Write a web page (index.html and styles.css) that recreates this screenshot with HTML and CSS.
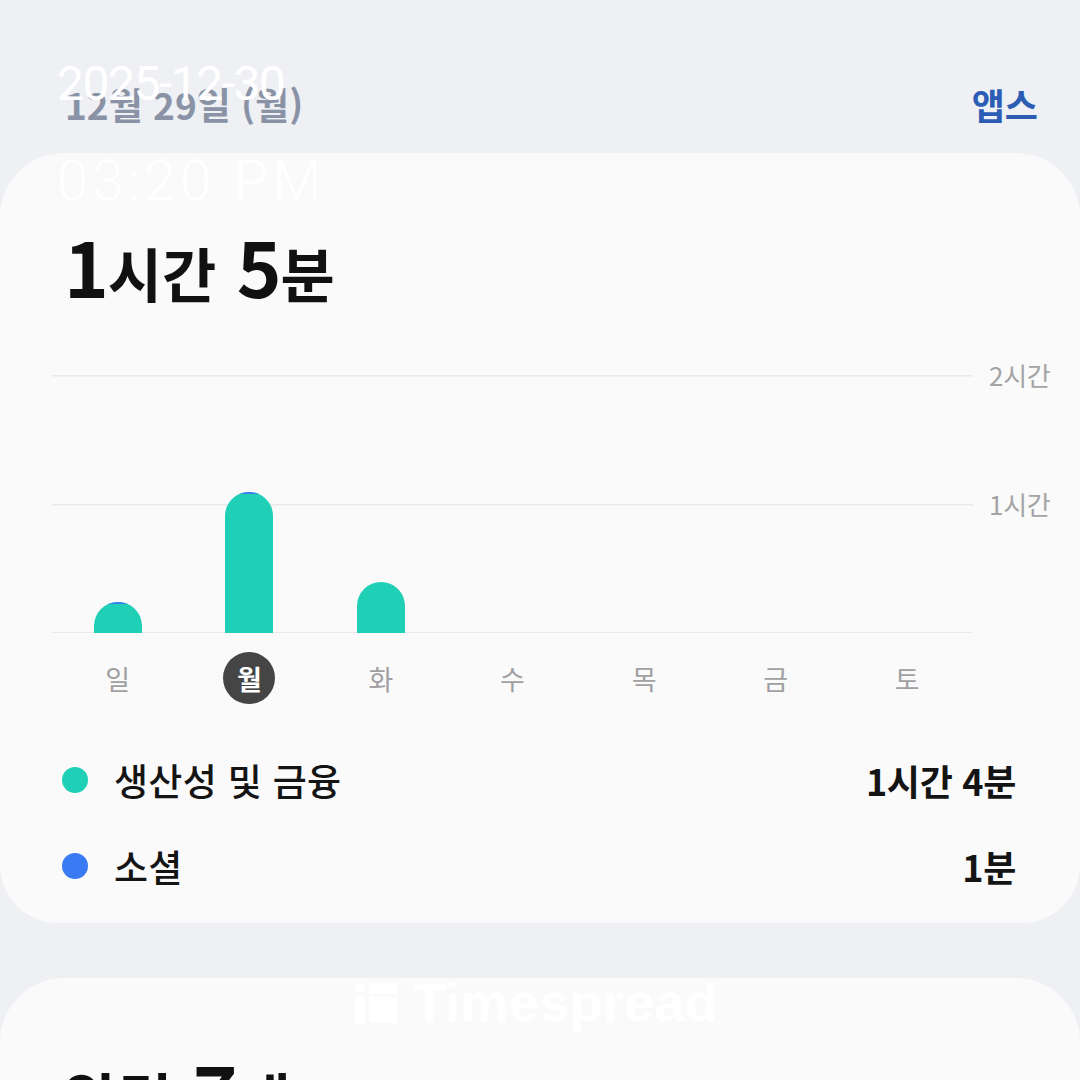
FILE: index.html
```html
<!DOCTYPE html>
<html lang="ko">
<head>
<meta charset="utf-8">
<title>디지털 웰빙</title>
<link rel="stylesheet" href="styles.css">
</head>
<body>
<header class="top">
  <div class="date">12월 29일 (월)</div>
  <div class="apps">앱스</div>
</header>

<section class="card">
  <h1 class="total"><span class="num">1</span><span class="unit">시간</span> <span class="num">5</span><span class="unit">분</span></h1>

  <div class="chart">
    <div class="plot">
      <div class="col"><div class="bar" style="height:31px"><i class="seg-blue"></i></div></div>
      <div class="col"><div class="bar" style="height:141px"><i class="seg-blue"></i></div></div>
      <div class="col"><div class="bar" style="height:51px"></div></div>
      <div class="col"></div>
      <div class="col"></div>
      <div class="col"></div>
      <div class="col"></div>
    </div>
    <div class="axis">
      <span>2시간</span>
      <span>1시간</span>
    </div>
  </div>

  <div class="days">
    <span class="day">일</span>
    <span class="day sel">월</span>
    <span class="day">화</span>
    <span class="day">수</span>
    <span class="day">목</span>
    <span class="day">금</span>
    <span class="day">토</span>
  </div>

  <ul class="legend">
    <li class="row"><span class="dot teal"></span><span class="name">생산성 및 금융</span><span class="val">1시간 4분</span></li>
    <li class="row"><span class="dot blue"></span><span class="name">소셜</span><span class="val">1분</span></li>
  </ul>
</section>

<section class="card card2">
  <h1 class="total"><span class="unit">알림</span> <span class="num">7</span><span class="unit">개</span></h1>
</section>

<div class="stamp">
  <div class="stamp-date">2025-12-30</div>
  <div class="stamp-time">03:20 PM</div>
</div>

<div class="mark">
  <svg width="42" height="42" viewBox="0 0 42 42">
    <rect x="0" y="2" width="10" height="10" rx="5" fill="#fff"/>
    <rect x="0" y="16" width="10" height="26" fill="#fff"/>
    <rect x="14" y="2" width="28" height="11" fill="#fff"/>
    <rect x="14" y="16" width="28" height="26" fill="#fff"/>
  </svg>
  <span class="mark-text">Timespread</span>
</div>
</body>
</html>
```

FILE: styles.css
```css
html, body {
  margin: 0;
  padding: 0;
}
body {
  width: 1080px;
  height: 1080px;
  overflow: hidden;
  background: #eef0f4;
  font-family: "Noto Sans CJK KR", "Noto Sans", sans-serif;
  position: relative;
}

.top {
  height: 153px;
  box-sizing: border-box;
  padding: 80px 42px 0 65px;
  display: flex;
  justify-content: space-between;
  align-items: flex-start;
  line-height: 48px;
  font-size: 37px;
  font-weight: 700;
}
.date { color: #8a93a6; }
.apps { color: #2c5db5; font-size: 36px; }

.card {
  background: #fafafa;
  border-radius: 64px 64px 58px 58px;
  padding: 67px 26px 27px 52px;
}
.card2 {
  margin-top: 55px;
  height: 400px;
}

.total {
  margin: 0;
  font-size: 76px;
  line-height: 90px;
  font-weight: 700;
  color: #111;
  padding-left: 12px;
  letter-spacing: -1px;
}
.total .unit {
  font-size: 59px;
  letter-spacing: 0;
}

.chart {
  margin-top: 42px;
  display: flex;
  align-items: flex-start;
  gap: 16px;
}
.plot {
  width: 921px;
  height: 258px;
  margin-top: 15px;
  display: grid;
  grid-template-columns: repeat(7, 1fr);
  align-items: end;
  justify-items: center;
  background:
    linear-gradient(#e9e9eb, #e9e9eb) 0 0 / 100% 1.5px no-repeat,
    linear-gradient(#e9e9eb, #e9e9eb) 0 129px / 100% 1.5px no-repeat,
    linear-gradient(#e9e9eb, #e9e9eb) 0 256.5px / 100% 1.5px no-repeat;
}
.col {
  width: 100%;
  height: 100%;
  display: flex;
  align-items: flex-end;
  justify-content: center;
}
.bar {
  width: 48px;
  background: #1fcfb6;
  border-radius: 24px 24px 0 0;
  overflow: hidden;
  display: flex;
  flex-direction: column;
}
.seg-blue {
  display: block;
  height: 2px;
  background: #3a7af2;
}
.axis {
  display: flex;
  flex-direction: column;
  gap: 99px;
  font-size: 26px;
  line-height: 30px;
  color: #a4a4a6;
  letter-spacing: -0.3px;
}

.days {
  margin-top: 19px;
  width: 921px;
  display: grid;
  grid-template-columns: repeat(7, 1fr);
  justify-items: center;
}
.day {
  width: 52px;
  height: 52px;
  border-radius: 50%;
  display: flex;
  align-items: center;
  justify-content: center;
  font-size: 27px;
  color: #a0a0a2;
}
.day.sel {
  background: #454545;
  color: #fff;
  font-weight: 700;
}

.legend {
  list-style: none;
  margin: 46px 38px 0 0;
  padding: 0;
  display: flex;
  flex-direction: column;
  gap: 26px;
}
.row {
  height: 60px;
  display: flex;
  align-items: center;
}
.dot {
  width: 26px;
  height: 26px;
  border-radius: 50%;
  margin-left: 10px;
  margin-right: 26px;
}
.dot.teal { background: #1fcfb6; }
.dot.blue { background: #3a7af2; }
.name {
  flex: 1;
  font-size: 37px;
  font-weight: 500;
  color: #141414;
  letter-spacing: 0.3px;
}
.val {
  font-size: 36px;
  font-weight: 700;
  color: #141414;
  letter-spacing: -0.3px;
}

.stamp {
  position: absolute;
  left: 57px;
  top: 56px;
  font-family: Roboto, "Open Sans", sans-serif;
  color: #fff;
}
.stamp-date {
  font-size: 48px;
  letter-spacing: -1.5px;
  line-height: 56px;
}
.stamp-time {
  margin-top: 36px;
  font-size: 56px;
  font-weight: 300;
  letter-spacing: 4.5px;
  line-height: 66px;
}

.mark {
  position: absolute;
  left: 355px;
  top: 980px;
  display: flex;
  align-items: center;
  gap: 16px;
}
.mark-text {
  font-family: "Liberation Sans", Arial, sans-serif;
  font-weight: 700;
  font-size: 54px;
  letter-spacing: 0.3px;
  color: #fff;
  line-height: 44px;
}
```
